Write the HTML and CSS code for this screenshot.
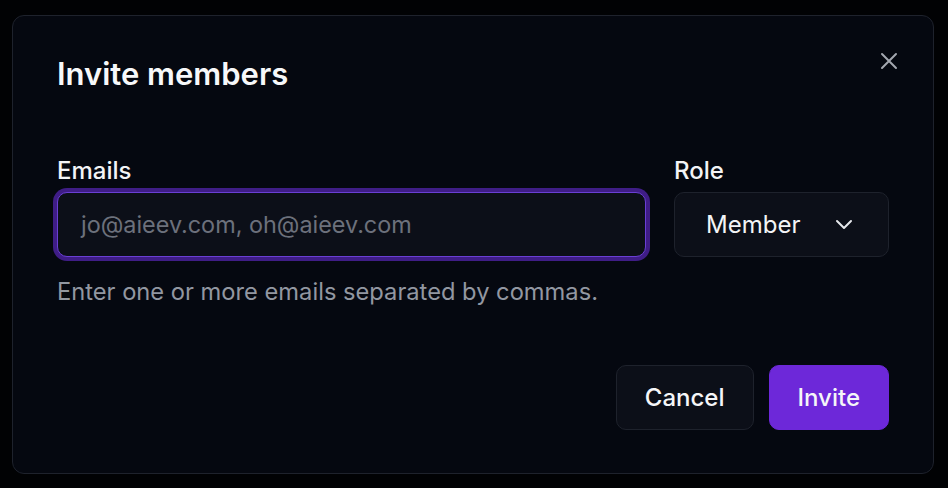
FILE: index.html
```html
<!DOCTYPE html>
<html lang="en">
<head>
<meta charset="utf-8">
<title>Invite members</title>
<link rel="stylesheet" href="styles.css">
</head>
<body>
<div class="dialog">
  <button class="close" aria-label="Close">
    <svg width="20" height="20" viewBox="0 0 20 20" fill="none" stroke="currentColor" stroke-width="2" stroke-linecap="round"><path d="M3 3L17 17M17 3L3 17"/></svg>
  </button>
  <h2 class="title">Invite members</h2>
  <div class="fields">
    <div class="field field-emails">
      <label class="label">Emails</label>
      <div class="input">jo@aieev.com, oh@aieev.com</div>
    </div>
    <div class="field field-role">
      <label class="label">Role</label>
      <div class="select">
        <span>Member</span>
        <svg width="20" height="20" viewBox="0 0 20 20" fill="none" stroke="currentColor" stroke-width="2" stroke-linecap="round" stroke-linejoin="round"><path d="M3 6L10 13L17 6"/></svg>
      </div>
    </div>
  </div>
  <p class="help">Enter one or more emails separated by commas.</p>
  <div class="footer">
    <button class="btn btn-cancel">Cancel</button>
    <button class="btn btn-invite">Invite</button>
  </div>
</div>
</body>
</html>
```
FILE: styles.css
```css
* { box-sizing: border-box; }
html, body { margin: 0; padding: 0; }
body {
  background: #010204;
  width: 948px;
  height: 488px;
  padding: 15px 0 0 12px;
  font-family: Inter, "Noto Sans", sans-serif;
  color: #f5f6f8;
}
.dialog {
  position: relative;
  width: 922px;
  height: 459px;
  background: #050810;
  border: 1px solid #1e222c;
  border-radius: 12px;
  padding: 40px 44px 42px 44px;
}
.close {
  position: absolute;
  top: 35px;
  right: 34px;
  background: none;
  border: 0;
  padding: 0;
  color: #a3a7af;
  display: flex;
}
.title {
  margin: 0;
  font-size: 31px;
  line-height: 36px;
  font-weight: 600;
  color: #f7f8fa;
}
.fields {
  display: flex;
  gap: 28px;
  margin-top: 64px;
}
.field { display: flex; flex-direction: column; }
.field-emails { flex: 1; }
.field-role { width: 215px; }
.label {
  font-size: 24px;
  line-height: 30px;
  font-weight: 500;
  margin-bottom: 6px;
  color: #f3f4f6;
}
.input {
  height: 65px;
  background: #0c0f18;
  border: 1px solid #6a3fd4;
  border-radius: 10px;
  box-shadow: 0 0 0 4px #3f1d86;
  padding: 0 23px;
  display: flex;
  align-items: center;
  font-size: 23.4px;
  color: #6c717c;
}
.select {
  height: 65px;
  background: #0c0f18;
  border: 1px solid #1e222c;
  border-radius: 10px;
  padding: 0 34px 0 31px;
  display: flex;
  align-items: center;
  justify-content: space-between;
  font-size: 24px;
  color: #f3f4f6;
}
.select svg { color: #e5e7eb; }
.help {
  margin: 20px 0 0 0;
  font-size: 23.7px;
  line-height: 30px;
  color: #9297a1;
}
.footer {
  display: flex;
  justify-content: flex-end;
  gap: 15px;
  margin-top: 58px;
}
.btn {
  height: 65px;
  border-radius: 10px;
  font-family: Inter, "Noto Sans", sans-serif;
  font-size: 24px;
  font-weight: 500;
  padding: 0 28px;
  color: #f5f6f8;
  cursor: pointer;
}
.btn-cancel {
  background: #0c0f18;
  border: 1px solid #1e222c;
}
.btn-invite {
  background: #6d28d9;
  border: 1px solid #6d28d9;
}
```
